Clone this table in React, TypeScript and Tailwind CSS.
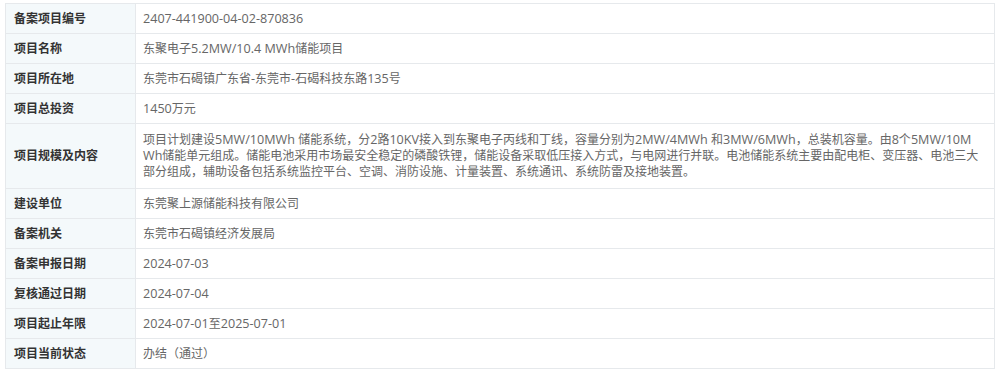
const rows: { label: string; value: string[] }[] = [
  { label: "备案项目编号", value: ["2407-441900-04-02-870836"] },
  { label: "项目名称", value: ["东聚电子5.2MW/10.4 MWh储能项目"] },
  { label: "项目所在地", value: ["东莞市石碣镇广东省-东莞市-石碣科技东路135号"] },
  { label: "项目总投资", value: ["1450万元"] },
  {
    label: "项目规模及内容",
    value: [
      "项目计划建设5MW/10MWh 储能系统，分2路10KV接入到东聚电子丙线和丁线，容量分别为2MW/4MWh 和3MW/6MWh，总装机容量。由8个5MW/10M",
      "Wh储能单元组成。储能电池采用市场最安全稳定的磷酸铁锂，储能设备采取低压接入方式，与电网进行并联。电池储能系统主要由配电柜、变压器、电池三大",
      "部分组成，辅助设备包括系统监控平台、空调、消防设施、计量装置、系统通讯、系统防雷及接地装置。",
    ],
  },
  { label: "建设单位", value: ["东莞聚上源储能科技有限公司"] },
  { label: "备案机关", value: ["东莞市石碣镇经济发展局"] },
  { label: "备案申报日期", value: ["2024-07-03"] },
  { label: "复核通过日期", value: ["2024-07-04"] },
  { label: "项目起止年限", value: ["2024-07-01至2025-07-01"] },
  { label: "项目当前状态", value: ["办结（通过）"] },
];

// latin runs render a touch wider in the original, bump them up a bit
function Mixed({ text }: { text: string }) {
  const parts = text.split(/([\x20-\x7e]+)/).filter(Boolean);
  return (
    <>
      {parts.map((p, i) =>
        /^[\x20-\x7e]+$/.test(p) ? (
          <span key={i} className="text-[12.6px]">
            {p}
          </span>
        ) : (
          <span key={i}>{p}</span>
        )
      )}
    </>
  );
}

export default function App() {
  return (
    <div
      className="w-[1000px] h-[375px] bg-white pl-[5px] pt-[3px]"
      style={{ fontFamily: '"Open Sans", "Noto Sans CJK SC", sans-serif' }}
    >
      <table className="w-[990px] border-collapse text-[12px] leading-[16px]">
        <tbody>
          {rows.map((r) => {
            const multi = r.value.length > 1;
            return (
              <tr key={r.label} className={multi ? "h-[64px]" : "h-[30px]"}>
                <td className="w-[130px] p-0 border border-[#e6e9ec] bg-[#f4f9fb] pl-[8px] font-bold text-[#333]">
                  {r.label}
                </td>
                <td
                  className={
                    "border border-[#e6e9ec] px-[7px] text-[#666] " + (multi ? "py-[8px]" : "py-0")
                  }
                >
                  {r.value.map((line, i) => (
                    <div key={i} className="whitespace-nowrap">
                      <Mixed text={line} />
                    </div>
                  ))}
                </td>
              </tr>
            );
          })}
        </tbody>
      </table>
    </div>
  );
}
